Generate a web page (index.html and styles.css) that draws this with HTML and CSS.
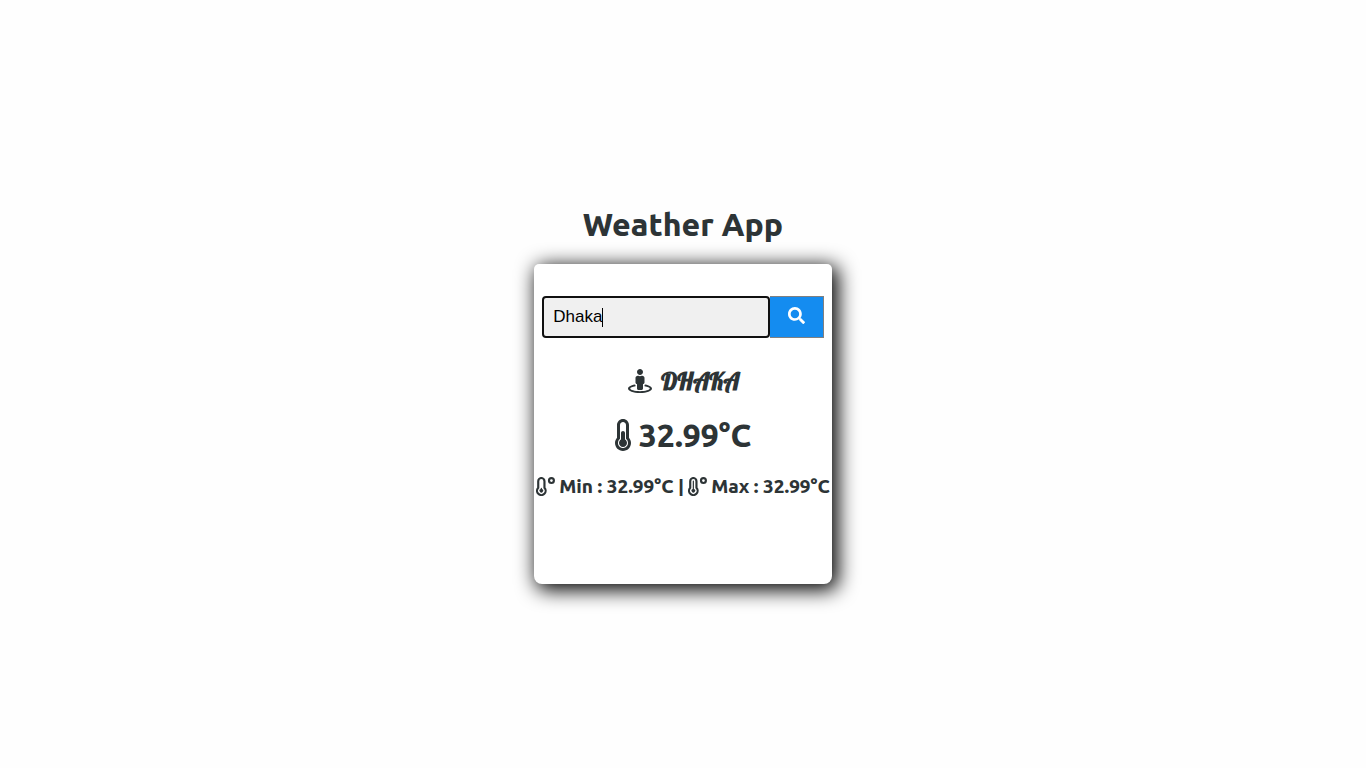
FILE: index.html
```html
<!DOCTYPE html>
<html lang="en">
<head>
<meta charset="utf-8">
<meta name="viewport" content="width=device-width, initial-scale=1">
<title>Weather App</title>
<link rel="stylesheet" href="styles.css">
</head>
<body>
<main class="app">
  <h1 class="title">Weather App</h1>
  <section class="card">
    <form class="search">
      <input class="search-input" type="text" name="city" value="Dhaka" aria-label="City" autocomplete="off" autofocus>
      <button class="search-button" type="submit" aria-label="Search">
        <svg class="icon-search" viewBox="0 0 512 512" aria-hidden="true"><path d="M505 442.7L405.3 343c-4.5-4.500-10.600-7-17-7H372c27.600-35.300 44-79.700 44-128C416 93.100 322.900 0 208 0S0 93.100 0 208s93.100 208 208 208c48.300 0 92.700-16.400 128-44v16.300c0 6.400 2.500 12.500 7 17l99.700 99.700c9.400 9.400 24.600 9.400 33.900 0l28.300-28.300c9.400-9.400 9.400-24.600.1-34zM208 336c-70.700 0-128-57.200-128-128 0-70.700 57.200-128 128-128 70.700 0 128 57.200 128 128 0 70.700-57.200 128-128 128z"/></svg>
      </button>
    </form>
    <h2 class="city">
      <svg class="icon-place" viewBox="0 0 512 512" aria-hidden="true"><path d="M367.900 329.760c-4.620 5.300-9.780 10.100-15.900 13.650v22.940c66.520 9.340 112 28.050 112 49.650 0 30.930-93.120 56-208 56S48 446.930 48 416c0-21.600 45.480-40.300 112-49.650v-22.940c-6.120-3.550-11.280-8.350-15.900-13.650C58.870 345.340 0 378.050 0 416c0 53.020 114.620 96 256 96s256-42.980 256-96c0-37.950-58.870-70.660-144.100-86.240zM256 128c35.350 0 64-28.650 64-64S291.350 0 256 0s-64 28.650-64 64 28.650 64 64 64zm-64 192v96c0 17.670 14.330 32 32 32h64c17.670 0 32-14.330 32-32v-96c17.670 0 32-14.330 32-32v-96c0-26.510-21.490-48-48-48h-11.800c-11.070 5.030-23.260 8-36.200 8s-25.130-2.970-36.200-8H208c-26.510 0-48 21.490-48 48v96c0 17.670 14.330 32 32 32z"/></svg>
      <span>DHAKA</span>
    </h2>
    <p class="temperature">
      <svg class="icon-thermometer" viewBox="0 0 256 512" aria-hidden="true"><path d="M192 384c0 35.346-28.654 64-64 64s-64-28.654-64-64c0-23.685 12.876-44.349 32-55.417V224c0-17.673 14.327-32 32-32s32 14.327 32 32v104.583c19.124 11.068 32 31.732 32 55.417zm32-84.653c19.912 22.563 32 52.194 32 84.653 0 70.696-57.303 128-128 128-.299 0-.609-.001-.909-.003C56.789 511.509-.357 453.636.002 383.333.166 351.135 12.225 321.755 32 299.347V96c0-53.019 42.981-96 96-96s96 42.981 96 96v203.347zM208 384c0-34.339-19.370-52.190-32-66.502V96c0-26.467-21.533-48-48-48S80 69.533 80 96v221.498c-12.732 14.428-31.825 32.100-31.999 66.080-.224 43.876 35.563 80.116 79.423 80.420L128 464c44.112 0 80-35.888 80-80z"/></svg>
      <span>32.99°C</span>
    </p>
    <p class="range">
      <svg class="icon-range" viewBox="0 0 512 512" aria-hidden="true">
        <path class="outline" d="M60 112a84 84 0 0 1 168 0v178a116 116 0 1 1-168 0z"/>
        <circle class="outline" cx="416" cy="96" r="66"/>
        <path d="M128 304a16 16 0 0 1 32 0v18a48 48 0 1 1-32 0z"/>
      </svg>
      <span>Min : 32.99°C |</span>
      <svg class="icon-range" viewBox="0 0 512 512" aria-hidden="true">
        <path class="outline" d="M60 112a84 84 0 0 1 168 0v178a116 116 0 1 1-168 0z"/>
        <circle class="outline" cx="416" cy="96" r="66"/>
        <path d="M128 112a16 16 0 0 1 32 0v210a48 48 0 1 1-32 0z"/>
      </svg>
      <span>Max : 32.99°C</span>
    </p>
  </section>
</main>
</body>
</html>
```

FILE: styles.css
```css
* {
  box-sizing: border-box;
}

body {
  margin: 0;
  background: #fefefe;
  color: #2d3436;
  font-family: Ubuntu, "Noto Sans", sans-serif;
}

svg {
  flex: none;
  fill: currentColor;
}

.app {
  display: flex;
  flex-direction: column;
  align-items: center;
  justify-content: center;
  min-height: 100vh;
}

.title {
  margin: 0;
  padding: 20px 0;
  font-size: 32px;
  font-weight: 900;
  line-height: 40px;
}

.card {
  display: flex;
  flex-direction: column;
  align-items: center;
  min-height: 320px;
  padding: 32px 0;
  border-radius: 5px 5px 8px 8px;
  background: #fff;
  box-shadow: 4px 4px 20px 2px #000;
}

.search {
  display: flex;
  align-self: stretch;
  margin: 0 8px;
}

.search-input {
  flex: 1;
  width: 0;
  height: 42px;
  padding: 0 9px;
  border: 2px solid #101010;
  border-radius: 4px;
  outline: none;
  background: #f0f0f0;
  color: #000;
  font: 17px "Liberation Sans", Arial, sans-serif;
}

/* Steady text cursor after the city name */
.search-input:focus {
  background: linear-gradient(#000, #000) 58px center / 1px 19px no-repeat #f0f0f0;
}

.search-button {
  display: flex;
  align-items: center;
  justify-content: center;
  width: 54px;
  padding: 0 0 4px;
  border: 1px solid #808080;
  border-left: 0;
  background: #148cf0;
  color: #fff;
}

.icon-search {
  width: 17px;
  height: 17px;
}

.city,
.temperature,
.range {
  display: flex;
  align-items: center;
  justify-content: center;
  margin: 0;
  font-weight: 900;
  white-space: nowrap;
}

.city {
  gap: 9px;
  margin-top: 27px;
  padding-left: 2px;
  font: 700 24px/32px Lobster, "Liberation Serif", serif;
}

.icon-place {
  width: 24px;
  height: 24px;
}

.temperature {
  gap: 8px;
  margin-top: 18px;
  font-size: 32px;
  line-height: 40px;
}

.icon-thermometer {
  width: 16px;
  height: 32px;
}

.range {
  gap: 4px;
  margin-top: 19px;
  padding: 0 2px;
  font-size: 19px;
  line-height: 24px;
}

.icon-range {
  width: 19px;
  height: 19px;
}

.outline {
  fill: none;
  stroke: currentColor;
  stroke-width: 58;
}
```
